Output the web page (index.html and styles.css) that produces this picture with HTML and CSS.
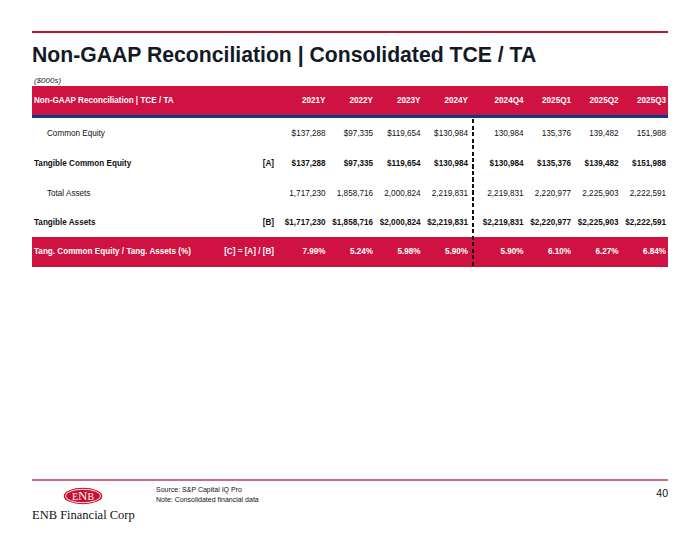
FILE: index.html
```html
<!DOCTYPE html>
<html lang="en">
<head>
<meta charset="utf-8">
<title>Non-GAAP Reconciliation | Consolidated TCE / TA</title>
<link rel="stylesheet" href="styles.css">
</head>
<body>
<div class="page">
  <div class="topline"></div>
  <h1 class="title">Non-GAAP Reconciliation | Consolidated TCE / TA</h1>
  <div class="units">($000s)</div>

  <div class="table">
    <div class="row head">
      <div class="label">Non-GAAP Reconciliation | TCE / TA</div>
      <div class="ref"></div>
      <div class="num">2021Y</div>
      <div class="num">2022Y</div>
      <div class="num">2023Y</div>
      <div class="num">2024Y</div>
      <div class="gap"></div>
      <div class="num">2024Q4</div>
      <div class="num">2025Q1</div>
      <div class="num">2025Q2</div>
      <div class="num">2025Q3</div>
    </div>
    <div class="body">
      <div class="row r31">
        <div class="label indent">Common Equity</div>
        <div class="ref"></div>
        <div class="num">$137,288</div>
        <div class="num">$97,335</div>
        <div class="num">$119,654</div>
        <div class="num">$130,984</div>
        <div class="gap"></div>
        <div class="num">130,984</div>
        <div class="num">135,376</div>
        <div class="num">139,482</div>
        <div class="num">151,988</div>
      </div>
      <div class="row r29 bold">
        <div class="label">Tangible Common Equity</div>
        <div class="ref">[A]</div>
        <div class="num">$137,288</div>
        <div class="num">$97,335</div>
        <div class="num">$119,654</div>
        <div class="num">$130,984</div>
        <div class="gap"></div>
        <div class="num">$130,984</div>
        <div class="num">$135,376</div>
        <div class="num">$139,482</div>
        <div class="num">$151,988</div>
      </div>
      <div class="row r31">
        <div class="label indent">Total Assets</div>
        <div class="ref"></div>
        <div class="num">1,717,230</div>
        <div class="num">1,858,716</div>
        <div class="num">2,000,824</div>
        <div class="num">2,219,831</div>
        <div class="gap"></div>
        <div class="num">2,219,831</div>
        <div class="num">2,220,977</div>
        <div class="num">2,225,903</div>
        <div class="num">2,222,591</div>
      </div>
      <div class="row r28 bold">
        <div class="label">Tangible Assets</div>
        <div class="ref">[B]</div>
        <div class="num">$1,717,230</div>
        <div class="num">$1,858,716</div>
        <div class="num">$2,000,824</div>
        <div class="num">$2,219,831</div>
        <div class="gap"></div>
        <div class="num">$2,219,831</div>
        <div class="num">$2,220,977</div>
        <div class="num">$2,225,903</div>
        <div class="num">$2,222,591</div>
      </div>
      <div class="row r30 total">
        <div class="label">Tang. Common Equity / Tang. Assets (%)</div>
        <div class="ref">[C] = [A] / [B]</div>
        <div class="num">7.99%</div>
        <div class="num">5.24%</div>
        <div class="num">5.98%</div>
        <div class="num">5.90%</div>
        <div class="gap"></div>
        <div class="num">5.90%</div>
        <div class="num">6.10%</div>
        <div class="num">6.27%</div>
        <div class="num">6.84%</div>
      </div>
    </div>
  </div>

  <div class="footer">
    <div class="footline"></div>
    <div class="footrow">
      <div class="brand">
        <svg class="logo" width="40" height="18" viewBox="0 0 40 18">
          <ellipse cx="20" cy="9" rx="19.3" ry="8.3" fill="#c8102e"/>
          <ellipse cx="20" cy="9" rx="17.6" ry="6.7" fill="none" stroke="#ffffff" stroke-width="0.9"/>
          <text x="20" y="12.6" text-anchor="middle" class="logo-text">E<tspan class="logo-n">N</tspan>B</text>
        </svg>
        <div class="brand-name">ENB Financial Corp</div>
      </div>
      <div class="notes">
        <div>Source: S&amp;P Capital IQ Pro</div>
        <div>Note: Consolidated financial data</div>
      </div>
      <div class="pageno">40</div>
    </div>
  </div>
</div>
</body>
</html>
```

FILE: styles.css
```css
html, body {
  margin: 0;
  padding: 0;
  background: #ffffff;
}

body {
  font-family: "Liberation Sans", Arial, sans-serif;
  color: #111111;
}

.page {
  width: 700px;
  height: 540px;
  box-sizing: border-box;
  padding: 31px 32px 0 32px;
  display: flex;
  flex-direction: column;
}

.topline {
  height: 2px;
  background: #c8102e;
}

.title {
  margin: 10px 0 0 0;
  font-size: 21.2px;
  line-height: 24px;
  font-weight: bold;
  color: #121a26;
  white-space: nowrap;
}

.units {
  margin-top: 9px;
  padding-left: 2px;
  font-size: 8px;
  line-height: 10px;
  font-style: italic;
  color: #222222;
}

.table {
  font-size: 8.15px;
}

.row {
  display: grid;
  grid-template-columns: 168px 80px repeat(4, 47.5px) 8px repeat(4, 47.5px);
  align-items: center;
  white-space: nowrap;
}

.row > div {
  line-height: 10px;
}

.head {
  height: 29px;
  background: #cf1241;
  border-bottom: 3px solid #0b3a8a;
  color: #ffffff;
  font-weight: bold;
}

.label {
  padding-left: 2px;
}

.indent {
  padding-left: 15px;
}

.ref {
  text-align: right;
  padding-right: 6px;
}

.num {
  text-align: right;
  padding-right: 2px;
}

.body {
  position: relative;
}

.body::after {
  content: "";
  position: absolute;
  left: 440px;
  top: 1px;
  bottom: 0;
  width: 1.6px;
  background: repeating-linear-gradient(to bottom, #111111 0 4px, transparent 4px 6.5px);
}

.r31 {
  height: 31px;
}

.r30 {
  height: 30px;
}

.r29 {
  height: 29px;
}

.r28 {
  height: 28px;
}

.bold {
  font-weight: bold;
}

.total {
  background: #cf1241;
  color: #ffffff;
  font-weight: bold;
}

.footer {
  margin-top: auto;
  height: 61px;
}

.footline {
  height: 1.5px;
  background: #d46a80;
}

.footrow {
  display: flex;
  align-items: flex-start;
}

.brand {
  width: 124px;
  flex: none;
}

.logo {
  display: block;
  margin: 6.5px 0 0 31px;
}

.logo-text {
  font-family: "Liberation Serif", "Times New Roman", serif;
  font-size: 10px;
  fill: #ffffff;
}

.logo-n {
  font-size: 13px;
}

.brand-name {
  margin-top: 3px;
  font-family: "Liberation Serif", "Times New Roman", serif;
  font-size: 12.5px;
  line-height: 14px;
  color: #111111;
  white-space: nowrap;
}

.notes {
  margin-top: 4.5px;
  font-size: 7px;
  line-height: 10px;
  color: #111111;
}

.pageno {
  margin-left: auto;
  margin-top: 6px;
  font-size: 10.5px;
  line-height: 12px;
  color: #111111;
}
```
